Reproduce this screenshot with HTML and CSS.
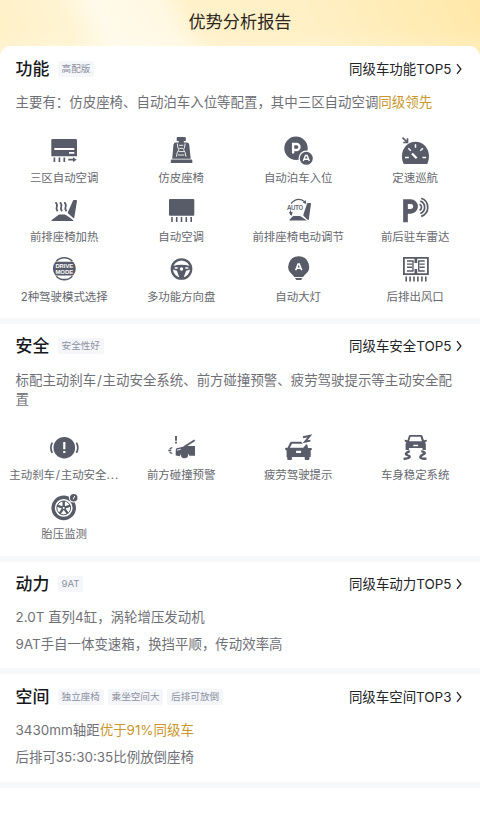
FILE: index.html
```html
<!DOCTYPE html>
<html lang="zh-CN">
<head>
<meta charset="utf-8">
<title>优势分析报告</title>
<link rel="stylesheet" href="styles.css">
</head>
<body>
<header class="top"><h1>优势分析报告</h1></header>
<main class="sheet">
  <section class="section section-func">
    <div class="head"><h2>功能</h2><span class="tag">高配版</span><a class="more">同级车功能TOP5<svg class="chev" viewBox="0 0 6 12"><path d="M1 1.200 4.900 6 1 10.800"/></svg></a></div>
    <p class="desc">主要有：仿皮座椅、自动泊车入位等配置，其中三区自动空调<em>同级领先</em></p>
    <div class="grid">
      <div class="item"><svg class="icon" viewBox="0 0 32 32"><path fill-rule="evenodd" d="M4.500 4h23.300q1.200 0 1.200 1.200v16.100H3.300V5.200Q3.300 4 4.500 4ZM6.300 13v2h20v-2ZM21 17v1.700h5.300V17Z"/><path class="line" stroke-width="1.700" d="M6.400 22.600V27M11.400 22.600V27M16.300 22.600V27M20.300 24.700H26"/><path d="m25 22.300 3.700 2.400-3.700 2.400Z"/></svg><span>三区自动空调</span></div>
      <div class="item"><svg class="icon" viewBox="0 0 32 32"><path d="M12.600 2h7.200q1 0 1 1v3h-2v1.500h3q2 0 2.400 2l1.500 14.300H7.200L8.500 9.500q.4-2 2.200-2h3V6h-2V3q0-1 .9-1ZM6.500 24.500h20q.8 0 .8 1V28H5.800v-2.500q0-1 .7-1Z"/><path class="cut" stroke-width=".9" d="M12.300 8.500q.2 4 1.500 6.200-2 2.500-2.400 7M20.100 8.500q-.2 4-1.500 6.200 2 2.500 2.400 7M14.100 10.300h4.200M14.200 13.300h4M13.500 16.600h5.400M13 20h6.300"/></svg><span>仿皮座椅</span></div>
      <div class="item"><svg class="icon" viewBox="0 0 32 32"><circle cx="14" cy="13.300" r="11.700"/><path class="cut" stroke-width="2.300" d="M11.100 18.600V9h3.400a3 3 0 0 1 0 6h-3.400"/><circle class="white" cx="24.300" cy="23.300" r="7.700"/><circle cx="24.300" cy="23.300" r="6.500"/><path class="cut" stroke-width="1.400" d="m21.300 26 2.200-5.500h1.600l2.200 5.500M22.300 24.200h4"/></svg><span>自动泊车入位</span></div>
      <div class="item"><svg class="icon" viewBox="0 0 32 32"><path d="M4.700 28.900A13.400 13.400 0 0 1 3 21C3 12.800 9.200 6.700 16.500 6.700S30 12.800 30 21q0 4.500-1.700 7.900Z"/><path class="cut" stroke-width="1.500" d="M16.500 9.300v3.500M9.300 13.300l2.500 2.500M23.900 13.200l-2.600 2.600M6 22.600h3.800M23.500 22.600h3.600"/><path class="cut" stroke-width="2.300" d="m13 18.500 4.700 4.800"/><path class="line" stroke-width="1.600" d="m3.500 2.700 4.200 4M8.500 3.200v4.300H4.200"/></svg><span>定速巡航</span></div>
      <div class="item"><svg class="icon" viewBox="0 0 32 32"><path d="M24.900 5.800q.3-.8 1-.8h2.300q.9 0 .8.900l-2.700 16.600q-.2 1.300-1.200.5l-4.900-4.400q-.8-.7-.2-1.600ZM10 20.300q.8-.7 1.600-.7h4.800q.8 0 1.500.5l7.300 4.900q1 1-.4 1H3.900q-1.200 0-.2-.9Z"/><path class="line" stroke-width="1.800" d="M7.300 8h.9q1.200 1.500.6 3.600-1 2 .8 4.700M11.700 8h.9q1.200 1.500.6 3.600-1 2 .8 4.700M16.100 8h.9q1.200 1.500.6 3.600-1 2 .8 4.700"/><path class="cut" stroke-width="1.100" d="m18 17.700 8 7.300"/></svg><span>前排座椅加热</span></div>
      <div class="item"><svg class="icon" viewBox="0 0 32 32"><path d="M5 4h23.300q1 0 1 1v14.700q0 1-1 1H5q-1 0-1-1V5q0-1 1-1Z"/><path class="line" stroke-width="1.600" d="M7 21.900V27M11.700 21.900V27M16.500 21.900V27M21.300 21.900V27M26.200 21.900V27"/></svg><span>自动空调</span></div>
      <div class="item"><svg class="icon" viewBox="0 0 32 32"><path d="M25 8.700q.2-.7.900-.7h2.400q.8 0 .7.800l-2.200 15.600q-.3 1.300-1.200.4l-3.900-3.900q-.6-.6-.3-1.400ZM10.500 21.500q.6-.5 1.300-.5h5.800q.7 0 1.300.5l6.100 3.900H8.200q-1.500 0-.4-1Z"/><path class="line" stroke-width="1.200" d="M9 8.500Q15.700 1.300 22.700 6.700M8.500 15.500q-.3 2 .5 4.200"/><path d="m20.700 7.400 3.200-2.200.3 3.700ZM6.700 17.300l4-.2L9.500 21Z"/><text class="auto" x="5" y="14.900" textLength="16">AUTO</text></svg><span>前排座椅电动调节</span></div>
      <div class="item"><svg class="icon" viewBox="0 0 32 32"><path class="line" stroke-width="4.700" d="M6.500 27.300V6.700h5.300a4.800 4.800 0 0 1 0 9.600H6.500"/><path class="line" stroke-width="1.700" d="M20.600 9.300a3.300 3.300 0 0 1 0 6M21.300 6.100a6.600 6.600 0 0 1 0 12.400M22.200 3.200a9.600 9.600 0 0 1 0 18.200"/></svg><span>前后驻车雷达</span></div>
      <div class="item"><svg class="icon" viewBox="0 0 32 32"><path class="line" stroke-width="1.600" d="M8.300 7.200a11 11 0 0 1 16 0M8.300 22.200a11 11 0 0 0 16 0"/><path d="M7.400 7.800h17.800q2.600 2.900 2.600 6.900t-2.600 6.900H7.400q-2.500-2.900-2.500-6.900t2.500-6.900Z"/><text class="mode" x="7.400" y="13.600" textLength="17.800" lengthAdjust="spacingAndGlyphs">DRIVE</text><text class="mode" x="7.400" y="20.200" textLength="17.800" lengthAdjust="spacingAndGlyphs">MODE</text></svg><span>2种驾驶模式选择</span></div>
      <div class="item"><svg class="icon" viewBox="0 0 32 32"><circle class="line" stroke-width="2.300" cx="16.500" cy="15" r="9.700"/><path fill-rule="evenodd" d="M8 12q8.500-2.500 17 0l.8 3.200-4.700 1.500-2.700 7.500h-3.800l-2.700-7.500-4.700-1.500ZM16.500 13.300a1.700 1.700 0 1 0 .01 0ZM9.700 13.300v1.500h3v-1.500ZM20.300 13.300v1.500h3v-1.500Z"/></svg><span>多功能方向盘</span></div>
      <div class="item"><svg class="icon" viewBox="0 0 32 32"><path d="M16.700 2.300a10.300 10.300 0 0 1 6.300 18.500q-1.500 1.200-1.800 2.200h-9q-.3-1-1.800-2.200A10.300 10.300 0 0 1 16.700 2.300ZM12.900 24h7.600l-1.500 1.900h-4.600Z"/><path class="cut" stroke-width="1.600" d="m13.700 16.200 2.400-6.100h1.200l2.400 6.100M14.700 14.300h4"/></svg><span>自动大灯</span></div>
      <div class="item"><svg class="icon" viewBox="0 0 32 32"><path class="line" stroke-width="1.800" d="M4.900 3.900h24v16.200h-24Z"/><path class="line" stroke-width="1.400" d="M8 7h6.500M8 10.100h5M8 13.200h5M8 17h6.500M19.200 7h6.500M20.700 10.100h5M20.700 13.200h5M19.200 17h6.500M14 6.500V17M19.700 6.500V17"/><path d="M15.500 4h2.700v5h-2.700ZM15.500 15h2.700v5h-2.700Z"/><path class="line" stroke-width="1.600" d="M7.200 22.600v5M11.100 22.600v5M15 22.600v5M18.900 22.600v5M22.900 22.600v5M26.800 22.600v5"/></svg><span>后排出风口</span></div>
    </div>
  </section>
  <section class="section section-safe">
    <div class="head"><h2>安全</h2><span class="tag">安全性好</span><a class="more">同级车安全TOP5<svg class="chev" viewBox="0 0 6 12"><path d="M1 1.200 4.900 6 1 10.800"/></svg></a></div>
    <p class="desc">标配主动刹车<i class="slash">/</i>主动安全系统、前方碰撞预警、疲劳驾驶提示等主动安全配置</p>
    <div class="grid">
      <div class="item"><svg class="icon" viewBox="0 0 32 32"><circle cx="16.300" cy="15.700" r="10.800"/><path class="cut" stroke-width="2.200" d="M16.300 10v7.300M16.300 18.900v2.200"/><path class="line" stroke-width="1.700" d="M4.300 10.600q-2.900 5.100 0 10.200M28.400 10.600q2.900 5.100 0 10.200"/></svg><span>主动刹车<i class="slash">/</i>主动安全<i class="dots">...</i></span></div>
      <div class="item"><svg class="icon" viewBox="0 0 32 32"><path d="M11.500 16.200 19 14.500l3-.5h8v9.800h-5.600a5 5 0 0 0-9.600.4l-4.100-.7v-5.800Z"/><circle cx="19.500" cy="22.700" r="3.600"/><path class="line" stroke-width="1.900" d="m19 15 10.700-6.800"/><path class="line" stroke-width="1.900" d="M11 3.900v4.900M11 9.800v1.800"/><path class="line" stroke-width="1.300" d="m7.300 15.500-2.700 1.300M6.400 18.500H3.300M7.300 21.500l-2.800-1.200"/><path class="cut" stroke-width=".9" d="m12 18.200 3.800-1"/></svg><span>前方碰撞预警</span></div>
      <div class="item"><svg class="icon" viewBox="0 0 32 32"><path fill-rule="evenodd" d="M8 10.700q.5-1 1.600-1h9.700l1.300 2H10l-2.200 4h13.500l2.300-2.700 2.700 3h2.700q1.300 0 1 1.500l-1.300 1v6.600h-1.300V27q0 1-1 1h-2.700q-1 0-1-1v-1.900H9.900V27q0 1-1 1H6.200q-1 0-1-1v-1.900H4.600v-6.600l-1.500-1Q2.700 16 4 15.800h1.600Zm6.100 8v2.300h5v-2.300Z"/><path class="line" stroke-width="1.900" d="m21 5.300 6.900-1.500-4.900 6 5.400-1.200"/><path class="line" stroke-width="1.700" d="m24.200 12.500 1 3"/></svg><span>疲劳驾驶提示</span></div>
      <div class="item"><svg class="icon" viewBox="0 0 32 32"><path fill-rule="evenodd" d="M11 3h11.200q1 0 1.300.9l1.400 4.300 2.800-.5v1.900l-1.600.6.700 1.600V18h-3.300v-2H9.900v2H6.600v-6.200l.7-1.600-1.600-.6V7.700l2.800.5 1.300-4.300q.3-.9 1.200-.9Zm.5 1.700-1.300 4.500h12.700l-1.300-4.500Zm2.800 8v1.600h4.800v-1.600Z"/><path class="line" stroke-width="2.400" d="M10.800 19.200Q4.800 21.700 8 23t2.600 1.800q0 1.500-6 2.200M22.300 19.200q6 1.400 1.700 3.300-4 2.500-2 3.500 2 1 5.500.6"/></svg><span>车身稳定系统</span></div>
      <div class="item"><svg class="icon" viewBox="0 0 32 32"><circle class="line" stroke-width="3.400" cx="15.700" cy="15.900" r="10.600"/><circle class="line" stroke-width="1" cx="15.700" cy="15.900" r="6.900"/><path class="line" stroke-width="2.400" d="M15.700 15.900V9M15.700 15.900l6.600-2.200M15.700 15.900l4.100 5.700M15.700 15.900l-4.100 5.700M15.700 15.900l-6.600-2.200"/><circle class="white" cx="15.700" cy="15.900" r="1"/><circle class="white" cx="25.700" cy="5.800" r="4.800"/><circle cx="25.700" cy="5.800" r="3.800"/><path class="cut" stroke-width="1" d="m25.200 7.300 1.500-3.300"/></svg><span>胎压监测</span></div>
    </div>
  </section>
  <section class="section section-power">
    <div class="head"><h2>动力</h2><span class="tag">9AT</span><a class="more">同级车动力TOP5<svg class="chev" viewBox="0 0 6 12"><path d="M1 1.200 4.900 6 1 10.800"/></svg></a></div>
    <p class="line-text">2.0T 直列4缸，涡轮增压发动机</p>
    <p class="line-text">9AT手自一体变速箱，换挡平顺，传动效率高</p>
  </section>
  <section class="section section-space">
    <div class="head"><h2>空间</h2><span class="tag">独立座椅</span><span class="tag">乘坐空间大</span><span class="tag">后排可放倒</span><a class="more">同级车空间TOP3<svg class="chev" viewBox="0 0 6 12"><path d="M1 1.200 4.900 6 1 10.800"/></svg></a></div>
    <p class="line-text">3430mm轴距<em>优于91%同级车</em></p>
    <p class="line-text">后排可35:30:35比例放倒座椅</p>
  </section>
</main>
</body>
</html>
```
FILE: styles.css
```css
* { box-sizing: border-box; }
body {
  margin: 0;
  width: 480px;
  height: 826px;
  overflow: hidden;
  color: #6f7076;
  font-family: Inter, "Noto Sans CJK SC", sans-serif;
  font-size: 13.440px;
  font-weight: 400;
  background: #fff;
}
h1, h2, p { margin: 0; }
em { font-style: normal; color: #c8962a; }
i { font-style: normal; }
.top {
  height: 62px;
  padding-top: 10px;
  text-align: center;
  background:
    linear-gradient(180deg, rgba(255,255,255,0) 45%, rgba(255,255,255,.25)),
    linear-gradient(63deg, #fff1c6 0%, #fff4d2 17%, #fffaea 24%, #fff8e2 37%, #fff1c9 43%, #fff0c5 65%, #ffe8a8 100%);
}
h1 { color: #29261e; font-size: 17.200px; line-height: 24px; font-weight: 400; }
.sheet {
  position: relative;
  margin-top: -16px;
  border-radius: 11px 11px 0 0;
  background: #fff;
}
.section { border-bottom: 6px solid #f7f8f9; }
.section-func { height: 278px; padding-top: 9px; }
.section-safe { height: 238px; padding-top: 8px; }
.section-power { height: 112px; padding-top: 8px; }
.section-space { height: 114px; padding-top: 9px; }
.head {
  display: flex;
  align-items: center;
  height: 26px;
  padding: 0 18.500px 0 15.500px;
}
h2 { margin: 1px 8.500px 0 0; color: #17181b; font-size: 16.900px; line-height: 26px; font-weight: 500; }
.tag {
  height: 16px;
  margin: 1px 4px 0 0;
  padding: 0 3.800px;
  border-radius: 2px;
  color: #8d929f;
  background: #f4f6fa;
  font-size: 9.600px;
  line-height: 16px;
  white-space: nowrap;
}
.more {
  display: flex;
  align-items: center;
  margin: 2px 0 0 auto;
  color: #222326;
  line-height: 20px;
}
.chev { width: 6px; height: 12px; margin-left: 4px; fill: none; stroke: #222326; stroke-width: 1.300; }
.desc { padding: 0 18px 0 15.500px; line-height: 19px; }
.section-func .desc { margin-top: 11.500px; }
.section-safe .desc { margin-top: 12.500px; }
.slash { margin: 0 .8px; }
.dots { letter-spacing: .9px; }
.grid {
  display: grid;
  grid-template-columns: repeat(4, 117px);
  grid-auto-rows: 59.600px;
  margin: 23.500px 0 0 5.700px;
}
.item { display: flex; flex-direction: column; align-items: center; min-width: 0; }
.icon { display: block; flex: none; width: 32px; height: 32px; fill: #585c68; }
.item > span {
  margin-top: .6px;
  color: #66686e;
  font-size: 11.450px;
  line-height: 20px;
  white-space: nowrap;
}
.line { fill: none; stroke: #585c68; }
.cut { fill: none; stroke: #fff; }
.white { fill: #fff; }
.auto { font: 600 6px Inter, sans-serif; }
.mode { fill: #fff; font: 700 5.800px "Liberation Sans", sans-serif; }
.line-text { padding-left: 15.500px; line-height: 27px; }
.section-power .line-text:nth-child(2), .section-space .line-text:nth-child(2) { margin-top: 8px; }
```
